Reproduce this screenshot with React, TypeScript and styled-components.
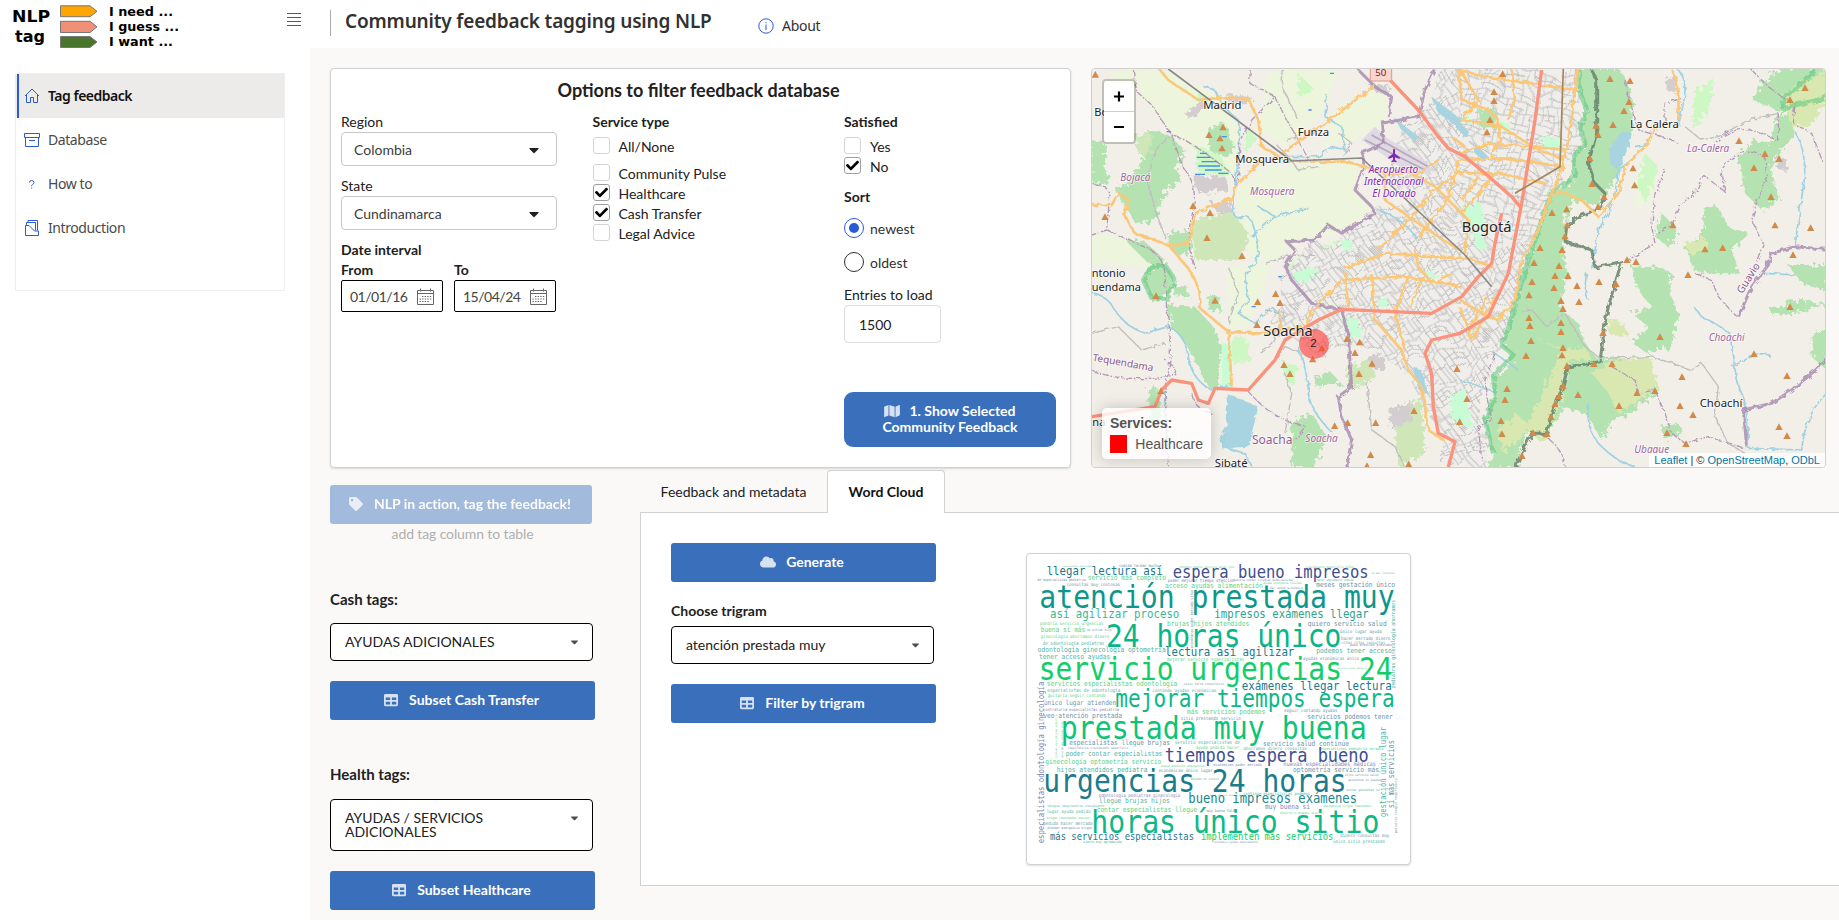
import React from "react";
import styled, { createGlobalStyle, css } from "styled-components";
import { FaMap, FaTag, FaTable, FaCloud, FaCaretDown, FaCheck } from "react-icons/fa";

const BLUE = "#396fbb";
const ACCENT = "#2a5bd7";

const GlobalStyle = createGlobalStyle`
  * { box-sizing: border-box; }
  html, body { margin: 0; padding: 0; overflow: hidden; }
  body { font-family: Lato, "Liberation Sans", sans-serif; font-size: 14px; color: #212121; background: #faf9f8; }
`;

/* ---------- Page frame ---------- */

const Page = styled.div`
  display: flex;
  width: 1839px;
  height: 920px;
  overflow: hidden;
  background: #faf9f8;
`;

const Sidebar = styled.aside`
  flex: 0 0 310px;
  background: #fff;
`;

const SidebarTop = styled.div`
  display: flex;
  justify-content: space-between;
  height: 73px;
  padding: 0 9px 0 0;
`;

const MenuIcon = styled.svg`
  width: 14px;
  height: 14px;
  margin-top: 13px;
`;

const Nav = styled.nav`
  width: 270px;
  height: 218px;
  margin-left: 15px;
  border: 1px solid #eee;
`;

const NavItem = styled.a<{ $active?: boolean }>`
  display: flex;
  align-items: center;
  gap: 7px;
  height: 44px;
  padding: 0 0 1px 7px;
  font-family: "Noto Sans", sans-serif;
  font-size: 14px;
  letter-spacing: ${(p) => (p.$active ? "-0.5px" : "-0.42px")};
  font-weight: ${(p) => (p.$active ? 600 : 400)};
  color: ${(p) => (p.$active ? "#111" : "#4a4a4a")};
  background: ${(p) => (p.$active ? "#edebe9" : "transparent")};
  box-shadow: ${(p) => (p.$active ? `inset 1px 0 #edebe9, inset 3px 0 ${ACCENT}` : "none")};
  svg { width: 18px; height: 18px; fill: none; stroke: ${ACCENT}; stroke-width: 1; }
`;

const Main = styled.main`
  flex: 1;
  min-width: 0;
`;

const Header = styled.header`
  display: flex;
  height: 48px;
  padding: 10px 0 0 20px;
  background: #fff;
`;

const HeaderTitle = styled.h1`
  height: 26px;
  width: 428px;
  margin: 0;
  padding-left: 14px;
  border-left: 1px solid #aaa;
  font: 600 19px/22px "Noto Sans", sans-serif;
  letter-spacing: -0.17px;
  color: #323130;
  white-space: nowrap;
`;

const About = styled.div`
  display: flex;
  align-items: center;
  gap: 8px;
  height: 31px;
  font: 400 14px "Noto Sans", sans-serif;
  letter-spacing: -0.3px;
  color: #323130;
  svg { width: 16px; height: 16px; fill: none; stroke: ${ACCENT}; }
`;

const TopRow = styled.section`
  display: flex;
  gap: 20px;
  padding: 20px 0 0 20px;
`;

const card = css`
  background: #fff;
  border: 1px solid #d0d1d2;
  border-radius: 4px;
  box-shadow: 0 1px 2px rgba(34, 36, 38, 0.15);
`;

/* ---------- Filter card ---------- */

const FilterCard = styled.div`
  ${card}
  width: 741px;
  height: 400px;
  padding: 8px 14px 0 10px;
`;

const CardTitle = styled.h2`
  margin: 0;
  font-size: 18px;
  line-height: 26px;
  font-weight: 700;
  text-align: center;
  letter-spacing: 0;
`;

const Columns = styled.div`
  display: grid;
  grid-template-columns: 216px 216px 212px;
  column-gap: 35.5px;
  padding-top: 9px;
`;

const Label = styled.div<{ $bold?: boolean; $size?: number }>`
  height: 20px;
  line-height: 20px;
  font-size: ${(p) => p.$size ?? 14}px;
  font-weight: ${(p) => (p.$bold ? 700 : 400)};
`;

const Select = styled.div<{ $dark?: boolean; $h?: number; $mb?: number }>`
  display: flex;
  justify-content: space-between;
  align-items: flex-start;
  width: ${(p) => (p.$dark ? 263 : 216)}px;
  height: ${(p) => p.$h ?? 34}px;
  margin-bottom: ${(p) => p.$mb ?? 0}px;
  padding: ${(p) => (p.$dark ? "11px 12px 0 14px" : "9px 14px 0 12px")};
  line-height: ${(p) => (p.$dark ? 14 : 16)}px;
  background: #fff;
  border: 1px solid ${(p) => (p.$dark ? "#000" : "#c8c8c8")};
  border-radius: 4px;
  color: ${(p) => (p.$dark ? "#212121" : "#3c3c3c")};
  svg { width: ${(p) => (p.$dark ? 11 : 16)}px; height: ${(p) => (p.$dark ? 12 : 16)}px; flex: none; margin-top: ${(p) => (p.$dark ? 1 : 0)}px; color: ${(p) => (p.$dark ? "#4d4d4d" : "#212121")}; }
  span { max-width: 170px; }
`;

const DateRow = styled.div`
  display: flex;
  gap: 11px;
`;

const DateField = styled.div`
  display: flex;
  align-items: center;
  justify-content: space-between;
  width: 102px;
  height: 32px;
  padding: 0 8px;
  border: 1px solid #000;
  border-radius: 2px;
  letter-spacing: -0.5px;
  color: #444;
  svg { width: 17px; height: 17px; }
`;

const CheckRow = styled.label<{ $mb?: number }>`
  display: flex;
  align-items: center;
  gap: 9px;
  height: 20px;
  margin-bottom: ${(p) => p.$mb ?? 0}px;
`;

const CheckBox = styled.span<{ $on?: boolean }>`
  display: flex;
  align-items: center;
  justify-content: center;
  width: 17px;
  height: 17px;
  margin-bottom: 1px;
  border: 1px solid ${(p) => (p.$on ? "#a0a0a0" : "#d4d4d5")};
  border-radius: 3px;
  svg { width: 13px; height: 13px; color: #000; }
`;

const RadioRow = styled.label`
  display: flex;
  align-items: center;
  gap: 6px;
  height: 34px;
  color: #323130;
`;

const Radio = styled.span<{ $on?: boolean }>`
  display: flex;
  align-items: center;
  justify-content: center;
  width: 20px;
  height: 20px;
  border: 1px solid ${(p) => (p.$on ? ACCENT : "#323130")};
  border-radius: 50%;
  &::after {
    content: "";
    width: 10px;
    height: 10px;
    border-radius: 50%;
    background: ${(p) => (p.$on ? ACCENT : "transparent")};
  }
`;

const NumberField = styled.div`
  width: 97px;
  height: 38px;
  margin-bottom: 49px;
  padding-left: 14px;
  line-height: 38px;
  border: 1px solid #dcdcdd;
  border-radius: 4px;
`;

const Button = styled.button<{ $w?: number; $tall?: boolean; $faded?: boolean }>`
  display: flex;
  align-items: center;
  justify-content: center;
  gap: 10px;
  width: ${(p) => p.$w ?? 265}px;
  height: ${(p) => (p.$tall ? 55 : 39)}px;
  padding: 0 ${(p) => (p.$tall ? 0 : 3)}px 2px 0;
  border: 0;
  border-radius: ${(p) => (p.$tall ? 9 : 3)}px;
  background: ${BLUE};
  opacity: ${(p) => (p.$faded ? 0.45 : 1)};
  color: #fff;
  font: 700 14px/16px Lato, sans-serif;
  letter-spacing: ${(p) => (p.$faded ? -0.03 : 0)}px;
  svg { opacity: 0.8; width: 16px; height: 14px; vertical-align: -2px; }
  span svg { margin-right: 9px; }
`;

/* ---------- Map ---------- */

const MapCard = styled.div`
  position: relative;
  width: 735px;
  height: 400px;
  border: 1px solid #cfcfd0;
  border-radius: 4px;
  overflow: hidden;
  font-family: "Liberation Sans", sans-serif;
  > svg { display: block; }
`;

const ZoomControl = styled.div`
  position: absolute;
  left: 10px;
  top: 10px;
  border: 2px solid rgba(0, 0, 0, 0.2);
  border-radius: 4px;
  background: #fff;
  background-clip: padding-box;
  svg { display: block; }
`;

const Legend = styled.div`
  position: absolute;
  left: 10px;
  bottom: 8px;
  width: 109px;
  height: 51px;
  padding: 6px 8px;
  color: #555;
  background: rgba(255, 255, 255, 0.8);
  border-radius: 5px;
  box-shadow: 0 0 15px rgba(0, 0, 0, 0.2);
  font-size: 14px;
  line-height: 18px;
`;

const LegendRow = styled.div`
  display: flex;
  gap: 8px;
  margin-top: 3px;
  &::before { content: ""; width: 18px; height: 18px; background: #f00; }
`;

const Attribution = styled.div`
  position: absolute;
  right: 0;
  bottom: 0;
  height: 14px;
  padding: 0 5px;
  font-size: 11px;
  line-height: 14px;
  color: #333;
  background: rgba(255, 255, 255, 0.8);
  a { color: #0078a8; }
`;

const forests = [
  "1480,24 1486,100 1505,150 1485,200 1500,250 1465,290 1470,350 1430,385 1400,395 1395,430 1370,480 1350,540 1330,600 1320,640 1300,700 1290,760 1265,820 1248,855 1285,885 1265,930 1225,950 1230,1010 1200,1080 1210,1130 1225,1180 1210,1225 1290,1225 1310,1170 1330,1115 1390,1120 1430,1060 1440,960 1450,910 1540,900 1500,850 1480,790 1430,750 1430,700 1450,640 1440,600 1440,500 1450,450 1480,420 1540,440 1565,400 1600,340 1615,260 1640,220 1645,130 1625,60 1600,24",
  "190,210 250,225 300,270 270,330 290,350 240,400 210,480 150,490 120,440 90,380 130,370 170,300",
  "370,205 420,190 445,250 430,290 375,285",
  "20,240 60,250 60,310 75,370 20,370",
  "250,735 330,740 385,800 410,860 405,900 400,990 370,985 340,920 300,850 260,800",
  "120,540 180,545 240,600 230,630 180,600",
  "175,660 195,625 240,615 270,660 245,715 200,715",
  "250,520 310,510 320,560 290,590 250,560",
  "265,675 310,680 310,710 265,705",
  "365,710 400,705 410,750 375,755",
  "620,1090 680,1060 725,1130 690,1221 620,1221",
  "690,960 730,930 770,970 690,980",
  "1960,290 2010,240 2085,260 2055,330 2085,410 2030,450 1980,400",
  "1730,460 1760,490 1780,520 1750,560 1710,530",
  "1860,440 1890,430 1930,500 1990,520 1940,570 1960,640 1830,640 1800,560 1850,520",
  "1720,620 1760,640 1755,700 1780,760 1760,860 1690,880 1640,850 1690,800 1640,760 1700,740 1660,690 1640,620",
  "1450,910 1600,890 1700,930 1720,990 1640,1060 1580,1080 1550,1140 1500,1060 1430,1040",
  "2050,740 2100,740 2110,725 2160,720 2225,740 2225,720 2160,755 2060,765",
  "2110,615 2225,615 2225,690 2150,670",
  "2180,830 2225,800 2225,930 2180,890",
  "1730,1100 1780,1090 1790,1120 1740,1140",
  "2000,120 2050,50 2090,24 2225,24 2225,110 2150,120 2080,150",
  "2070,180 2110,150 2130,220 2080,290 2060,250",
  "190,990 215,980 230,1060 200,1110",
];
const farms = [
  "60,30 240,30 420,120 460,190 470,290 450,370 350,300 260,220 150,90",
  "560,320 820,310 810,380 870,450 760,520 660,540 560,600 500,600 460,450 450,390",
  "550,30 760,30 720,150 600,260 520,200",
  "760,140 900,80 900,190 830,230 720,260",
  "120,530 0,520 20,610 180,620 220,560",
  "430,620 560,610 520,720 480,800 430,810",
  "1650,330 1720,330 1700,420 1650,450",
];
const pastures = [
  "330,480 440,450 490,520 470,600 330,600 320,520",
  "780,930 860,890 870,950 800,990",
  "930,1080 1010,1010 1020,1180 940,1225",
  "150,230 200,220 200,280 160,285",
];
const olive = [
  "1340,830 1440,870 1500,860 1520,900 1450,900 1430,1020 1370,1150 1330,1110 1250,1180 1240,1110 1290,1060 1330,1090 1390,960 1430,870",
  "1580,900 1700,890 1720,980 1600,1060 1570,1000 1520,940",
  "2090,110 2220,30 2225,110 2180,200 2120,200",
  "1570,780 1620,790 1630,830 1570,825",
  "1800,550 1860,530 1870,560 1820,590",
];
const limes = [
  "340,90 380,140 330,150", "480,200 520,240 480,280", "330,260 400,280 440,350 340,340",
  "600,640 640,590 760,540 740,640 640,680", "440,840 480,830 500,900 440,910", "1090,40 1120,30 1130,70 1100,80",
  "1680,280 1720,320 1680,430 1660,380", "1830,90 1890,60 1870,150 1820,210", "640,40 690,90 640,110",
  "590,900 640,920 630,980 600,960",
];
const greys = [
  "300,160 350,120 370,140 310,180", "320,350 420,350 430,390 340,400", "380,430 440,420 440,460 390,455",
  "430,100 500,110 490,130 430,130", "1740,60 1780,50 1770,100 1745,90", "2075,290 2110,300 2100,335 2075,325",
  "850,890 900,880 900,930 860,930", "910,1050 980,1020 980,1080 920,1110", "850,70 920,80 910,100 860,95", "990,940 1030,930 1030,1000 995,1000",
];
const urban =
  "1050,24 1480,24 1490,240 1465,300 1400,395 1370,480 1325,610 1290,740 1250,860 1215,960 1190,1080 1200,1221 1080,1221 1060,1100 950,930 880,880 800,850 720,900 600,820 540,780 590,740 590,660 640,590 760,530 880,450 960,420 900,330 960,220 1030,120";
const north = "1120,24 1480,24 1490,240 1465,300 1400,395 1340,560 1200,560 1130,400";
const parks = [
  "1370,230 1425,235 1420,270 1370,265", "1130,440 1190,430 1200,500 1150,510", "780,780 820,775 830,830 800,835",
  "1095,1020 1140,980 1165,1110 1100,1080", "770,540 800,530 800,570 775,570", "1160,520 1180,510 1210,560 1180,570",
  "1250,190 1270,185 1275,215 1250,215", "1130,180 1150,160 1160,190", "880,720 910,715 905,740 880,740", "1020,640 1050,630 1050,660",
  "620,640 700,620 680,660 640,670",
];
const rivers = [
  "M355,80 Q390,80 400,110 T460,180 Q470,250 450,370 T470,470 T520,590 L480,650 L490,720 L460,760 L510,790 L560,740 L590,770",
  "M610,290 L700,290 L740,260 L780,270 L770,200 L720,170 L725,105",
  "M520,440 L570,470 L500,530", "M570,470 L670,445",
  "M20,700 Q60,700 90,750 T180,820 L250,800 Q300,820 310,890 T380,990 L440,970",
  "M640,860 Q670,950 670,990 T700,1070 T745,1120",
  "M1780,30 Q1810,60 1795,130 T1780,200 M1650,260 L1690,250 L1640,300 L1600,330 L1590,400 L1570,460 L1540,510 L1520,630",
  "M1505,640 Q1495,690 1510,720 M2130,215 Q2170,280 2155,380 T2130,560",
  "M1830,745 L1850,770 L1890,790 L1935,820 Q1950,960 1970,1000 T1990,1165 L2150,1170 Q2160,1060 2225,1000",
  "M1510,1030 Q1500,1110 1550,1160 T1650,1220 M2040,640 L2130,645 M1940,920 L2020,880 L2055,885",
  "M1230,880 L1300,930 M1125,960 L1230,995 M880,450 Q950,470 1000,540",
  "M240,990 Q235,1060 250,1110 M410,1160 L480,1180 L500,1220",
];
const bounds = [
  "M145,30 L155,95 L200,135 L260,225 L300,240 L370,285 L440,340 L455,375",
  "M260,225 Q280,300 310,345 T320,470 T330,625",
  "M495,30 V70 L570,110 L500,180 L465,240 L460,370",
  "M570,110 L600,170 L640,240 L670,300",
  "M20,370 L60,380 L75,400 L65,510 L20,525 M65,510 Q130,540 180,560 T240,640 L245,750 Q270,870 240,980 L250,1220",
  "M20,930 Q80,960 200,955 T240,900 M320,1000 Q330,1050 380,1060 M490,995 Q540,1050 580,1070 T660,1100 L630,1140",
  "M1620,60 L1640,150 L1660,210 L1730,230 M1740,180 L1740,130 L1790,115 M1720,225 L1780,250",
  "M2000,30 L2050,80 L2090,110 L2130,130 L2125,190 L2180,220 L2215,310",
  "M1890,250 Q1960,170 2080,245 L2080,160 M1920,395 L1910,330 Q1960,250 2040,290 L2045,350 L2020,410 L2000,480 L2035,550 L2005,630",
  "M1920,395 L1855,345 L1830,400 L1790,430 L1760,495 L1720,520 M1740,330 L1710,400 L1700,500 L1710,550 L1630,600",
  "M1830,640 L1880,660 L1900,710 L1955,770 M1580,920 L1650,960 L1660,1000 L1710,990 L1740,1060 L1760,1120 L1800,1150 L1870,1130 L1980,1165",
  "M1360,1120 Q1430,1150 1440,1220 M1230,880 L1200,960 L1220,1080 L1180,1100 L1190,1200",
];
const strongBounds = [
  "M820,30 L870,80 L920,110 L910,170",
  "M1050,24 L1020,90 L1000,170 L890,190 L895,250 L830,280 L840,310 L810,390 L860,440 L870,460 L770,520 L730,495 L690,540 L605,545 L630,570 L600,620 L620,660 L680,730 L770,750 L790,830 L800,980 L760,1010 L770,1070 L800,1140 L785,1221",
  "M2225,900 L2180,940 L2120,990 L2060,1030 L1975,1050 L1985,1160 M1960,770 L2000,680 L2050,615 L2060,580 L2130,560 L2225,568",
];
const minorRoads = [
  "M260,225 L215,265 L185,350 L210,450 L245,540",
  "M20,820 L100,800 L170,870 L240,850",
  "M1800,200 L1850,240 L1900,230 L1990,180 L2080,160",
  "M1310,755 L1340,750 L1385,800 L1440,760 L1500,860 L1545,895 L1700,890 L1820,930 L1850,910 L1900,980 L1890,1070 L1930,1150 L1980,1180",
  "M430,620 L460,700 L430,790 M600,940 L620,1000 L600,1120 M845,960 L860,1110 L930,1160 L960,1221",
  "M595,30 L590,80 L640,180 M760,220 L800,250 L770,290 M600,240 L640,230 M570,250 L610,290 L640,330 L700,320",
  "M540,610 L620,585 L700,590 M540,750 L600,760 L560,850 L520,880 M570,900 L600,860 L650,880",
];
const yellowRoads = [
  "M220,24 L250,60 L340,120 L420,112 L490,118 L520,180 L530,260 L600,300 L690,305 L790,305 L900,340 L960,330",
  "M590,280 L720,190 L870,75", "M530,300 L450,380 L440,415 L330,460 L320,520 L310,550 L250,555 L150,520 L115,460 L130,420 L100,400 L80,435 L20,435",
  "M250,555 L310,625 L340,680 L345,745 L430,815 L440,980", "M430,815 L520,820 L660,800 L680,755 L770,660 L960,650 L1130,680",
  "M900,340 L900,420 L970,470 L1060,530 L1125,570 M1125,30 L1180,120 L1130,180 L1250,200 L1360,270 L1440,300",
  "M1125,30 L1200,50 L1470,90 M1280,30 L1290,110 L1270,180 M960,330 L1050,380 L1150,480 L1140,580 M1120,285 L1210,250 L1450,270",
  "M1000,530 L1090,420 L1120,300 M1480,24 L1470,90 L1450,240 L1430,330 L1400,400 L1360,510 L1310,600 L1290,720 L1240,780 L1190,760 L1125,720",
  "M780,640 L790,740 M860,640 L870,780 L950,870 L970,930 L1010,980 L1030,1110 L1060,1130 M970,650 L930,760 L960,870 M1010,660 L975,740 M1030,1110 L1075,1140",
  "M780,625 L900,580 L1150,595 L1220,620 M880,570 L960,490 L1040,400 M1125,740 L1160,840 L1240,700 M1210,700 L1150,820",
  "M1760,30 Q1785,70 1780,180 M1710,200 L1690,250 L1620,320 L1600,400 L1540,470 L1520,450 L1490,420 L1430,395 L1390,410",
  "M1125,340 L1240,340 L1380,370 M1230,340 L1180,400 L1125,460 M585,750 V830",
  "M1120,30 L1130,120 L1210,150 L1240,180 L1245,240 L1215,300 M1125,300 L1250,295 L1440,320 M1180,350 L1130,420",
  "M900,340 L1000,340 L1060,300 M1040,400 L1125,330 M990,570 L1000,620 L1040,670 L1100,640 M1100,230 L1140,260",
];
const redRoads = [
  "M915,60 L1000,150 L1060,230 L1090,265 L1140,290 L1200,340 L1280,410 L1305,440",
  "M1370,30 L1350,180 L1310,430 L1270,640 L1210,770 L1125,820 L1040,840 L1020,880 L1040,940 L1045,1040 L1060,1120 L1110,1145 L1090,1221",
  "M1250,460 L1230,550 L1220,610 L1180,650 L1130,710 L1040,760 L770,748 L700,780 L600,840 L570,900 L490,990 L390,985 L370,1030 L340,1020 L320,970 L260,960 L230,990 L210,1040 L20,1070",
];
const ridge = "M1520,30 L1535,60 L1535,220 L1510,310 L1530,370 L1560,400 L1545,445 L1480,470 L1445,500 L1440,545 L1520,570 L1530,620 L1610,605 L1590,670 L1570,740 L1560,790 L1545,905 L1450,920 L1430,990 L1400,1060 L1385,1120 L1340,1120 L1310,1180 L1290,1225";
const reserves = [
  "M1480,30 L1486,100 L1505,150 L1485,200 L1500,250 L1465,290 L1470,350 L1400,395 L1370,480 L1330,600 L1300,700 L1265,820 L1248,855 L1285,885 L1225,950 L1230,1010 L1200,1080 L1225,1180",
  "M175,660 L195,625 L240,615 L270,660 L245,715 L200,715Z",
  "M2090,150 L2100,110 L2150,70 L2190,30 M2090,150 L2130,135 L2200,120 L2225,105",
];
const peaks: [number, number][] = [
  [31,44],[414,202],[372,225],[405,235],[411,265],[324,438],[375,459],[60,471],[366,534],[471,588],[213,708],[390,722],[518,726],[572,702],[585,729],[516,795],[597,915],[615,942],[683,898],[711,865],[786,837],[824,847],[810,879],[861,911],[822,942],[749,1098],[788,1089],[872,1089],[987,1053],[1116,927],[1124,1086],[857,1185],[846,1218],[971,1213],[228,993],
  [1253,42],[1227,96],[1227,123],[1215,180],[1206,217],[1575,57],[1635,63],[1632,126],[1617,153],[1584,195],[1533,197],[1539,225],[1515,295],[1644,325],[1649,376],[1521,372],[1557,411],[1539,441],[1445,448],[1401,459],[1446,496],[1440,529],[1365,564],[1431,570],[1347,609],[1422,618],[1626,600],[1653,606],[1764,496],[1860,568],[1913,564],[1962,243],[2040,282],[2007,324],[2082,297],[2058,411],[2070,496],[2177,504],[2124,585],[2160,84],[2115,120],
  [1341,666],[1410,648],[1449,648],[1407,684],[1476,678],[1542,666],[1593,672],[1332,706],[1428,723],[1434,747],[1482,726],[1332,774],[1335,798],[1428,789],[1428,816],[1338,843],[1323,888],[1434,864],[1431,886],[1446,918],[1527,912],[1581,912],[1554,819],[1434,978],[1422,1008],[1479,1005],[1410,1032],[1398,1071],[1266,987],[1260,1020],[1248,1083],[1251,1122],[1344,1119],[1386,1122],[1311,1188],[1602,1038],[1656,999],[1710,993],[1791,951],[1785,1038],[1824,1065],[1746,1119],[1803,1152],[1725,831],[1809,645],[2115,741],[2007,882],[2106,948],[2082,1101],[2106,1128],[1146,1017],
];

type Place = [string, number, number, number, string?, boolean?, string?];
const places: Place[] = [
  ["Bo", 28, 168, 33], ["Madrid", 355, 147, 34], ["Funza", 638, 229, 34], ["Mosquera", 451, 308, 34],
  ["Bojacá", 106, 363, 30, "#a265a0", true], ["Mosquera", 495, 404, 30, "#a265a0", true],
  ["Aeropuerto", 851, 339, 30, "#8427b4", true], ["Internacional", 837, 375, 30, "#8427b4", true], ["El Dorado", 862, 411, 30, "#8427b4", true],
  ["Bogotá", 1130, 516, 44], ["La Calera", 1635, 204, 34], ["La-Calera", 1806, 276, 30, "#a265a0", true],
  ["ntonio", 20, 651, 33], ["uendama", 20, 693, 33], ["Soacha", 535, 829, 44], ["Soacha", 501, 1153, 36, "#925c92"],
  ["Soacha", 661, 1145, 30, "#a265a0", true], ["Sibaté", 389, 1220, 34], ["Choachí", 1844, 1042, 34],
  ["Choachi", 1871, 843, 30, "#a265a0", true], ["Ubaque", 1648, 1179, 30, "#a265a0", true], ["na", 22, 1098, 33],
  ["Tequendama", 22, 902, 30, "#8a5588", false, "rotate(10 22 902)"], ["Guavio", 1972, 703, 31, "#8a5588", false, "rotate(-58 1972 703)"],
];

const draw = (list: string[], stroke: string, width: number, extra: object = {}) =>
  list.map((d, i) => <path key={stroke + i} d={d} fill="none" stroke={stroke} strokeWidth={width} strokeLinejoin="round" {...extra} />);
const fillAreas = (list: string[], color: string) => list.map((p, i) => <polygon key={color + i} points={p} fill={color} />);

const MapDrawing = () => (
  <svg width="733" height="398" viewBox="21 27 2199 1194" fontFamily='"Noto Sans", sans-serif'>
    <defs>
      <pattern id="blocks" width="97" height="83" patternUnits="userSpaceOnUse" patternTransform="rotate(-34)">
        <path d="M0 3H97M0 19H62M20 34H97M0 52H50M44 66H97M4 0V83M22 3V52M41 0V34M58 19V83M76 0V66M88 34V83" stroke="#bcbabb" strokeWidth="2.6" fill="none" />
      </pattern>
      <pattern id="blocksNorth" width="103" height="89" patternUnits="userSpaceOnUse" patternTransform="rotate(13)">
        <path d="M0 3H103M0 22H70M30 38H103M0 57H60M50 73H103M4 0V89M24 3V57M45 0V38M62 22V89M82 0V73" stroke="#bab8b9" strokeWidth="2.6" fill="none" />
      </pattern>
      <filter id="ragged" x="-5%" y="-5%" width="110%" height="110%">
        <feTurbulence type="fractalNoise" baseFrequency="0.07" numOctaves="3" seed="4" />
        <feDisplacementMap in="SourceGraphic" scale="36" />
      </filter>
      <filter id="wiggle" x="-5%" y="-5%" width="110%" height="110%">
        <feTurbulence type="fractalNoise" baseFrequency="0.06" numOctaves="2" seed="9" />
        <feDisplacementMap in="SourceGraphic" scale="16" />
      </filter>
      <filter id="bend" x="-5%" y="-5%" width="110%" height="110%">
        <feTurbulence type="fractalNoise" baseFrequency="0.012" numOctaves="2" seed="3" />
        <feDisplacementMap in="SourceGraphic" scale="70" />
      </filter>
    </defs>
    <rect width="2260" height="1260" fill="#f2efe9" />
    <g filter="url(#ragged)">
      {fillAreas(farms, "#edf5dc")}
      {fillAreas(forests, "#b4e2b0")}
      {fillAreas(pastures, "#cfe6b8")}
      {fillAreas(olive, "#d8e8b0")}
      {fillAreas(limes, "#cdf8c3")}
      {fillAreas(greys, "#d3cdd0")}
    </g>
    <polygon points="410,850 440,850 440,985 412,975" fill="#c8fcd5" />
    <g filter="url(#bend)">
      <polygon points={urban} fill="#f0eeea" />
      <polygon points={urban} fill="url(#blocks)" />
      <polygon points={north} fill="#f0eeea" />
      <polygon points={north} fill="url(#blocksNorth)" />
    </g>
    <g filter="url(#ragged)">
      {fillAreas(["1180,150 1235,145 1230,205 1185,205", "1395,400 1370,480 1330,600 1300,700 1265,820 1330,820 1400,600 1440,430", "1480,24 1486,100 1505,150 1485,200 1500,250 1465,290 1470,350 1420,390 1530,390 1530,24"], "#b4e2b0")}
      {fillAreas(parks, "#c8fcd5")}
    </g>
    <polygon points="830,240 870,200 900,230 1030,310 1040,345 960,330" fill="#dfd9e3" />
    <path d="M840 240L1020 330M860 225L1030 320" stroke="#b7a8bb" strokeWidth="5" />
    <g filter="url(#wiggle)" fill="#a8d4e2">
      <path d="M1590 235L1610 215L1640 220L1635 250L1610 310L1595 330L1575 310L1572 270Z" />
      <path d="M425 1000L520 1040L500 1120L490 1160L410 1165L405 1130L425 1100Z" />
      <path d="M925 170L1000 230L990 245L950 210ZM1040 110L1130 180L1125 205L1060 160Z" />
      <path d="M1110 170L1155 220L1140 230L1110 200ZM1170 250L1210 290L1200 305L1170 280ZM985 920L1010 930L1030 1000L1000 990Z" />
    </g>
    <g filter="url(#wiggle)">
      {draw(rivers, "#9fd1e3", 5)}
      {draw(bounds, "#b597b8", 4, { strokeDasharray: "20 5 5 5" })}
      {draw(strongBounds, "#a588ae", 9, { opacity: 0.8 })}
      {draw(reserves, "#4fc476", 14, { opacity: 0.5 })}
      {draw([ridge], "#67836a", 9, { opacity: 0.85 })}
      {draw(minorRoads, "#c0bebf", 4)}
      {draw(yellowRoads, "#fac878", 8)}
    </g>
    {draw(redRoads, "#fa927c", 10)}
    <path d="M1435 24L1425 320L1290 400" fill="none" stroke="#a3865a" strokeWidth="5" />
    <path d="M250 27L620 303L830 294L1140 585L1220 680" fill="none" stroke="#888" strokeWidth="5" />
    <path d="M335 292h40M350 305h45M340 318h40M370 318h35M360 330h50M330 343h30M400 340h30M345 280h20M245 215h12M410 230h15M670 150h10M735 40h12M580 650h10M500 740h12" stroke="#3f91f2" strokeWidth="4" />
    {peaks.map(([x, y], i) => <path key={i} d={`M${x} ${y - 11}l11 20h-22z`} fill="#d38a48" />)}
    <path transform="translate(927 287)" d="M-3 -18Q0 -24 3 -18V-6L17 5V10L3 5V13L8 17V20L0 18L-8 20V17L-3 13V5L-17 10V5L-3 -6Z" fill="#8427b4" />
    <rect x="856" y="10" width="64" height="53" rx="5" fill="#f9d5ce" stroke="#d99a8e" strokeWidth="3" />
    <text x="871" y="48" fontSize="29" fill="#74231a">50</text>
    <circle cx="687" cy="852" r="45" fill="#ff3b3b" fillOpacity="0.62" />
    {places.map(([t, x, y, s, c, it, tr], i) => (
      <text key={i} x={x} y={y} fontSize={s} fill={c ?? "#222"} fontStyle={it ? "italic" : "normal"} transform={tr}
        stroke="#fff" strokeOpacity="0.7" strokeWidth="5" paintOrder="stroke" strokeLinejoin="round">{t}</text>
    ))}
    <text x="676" y="862" fontSize="34" fontFamily='"Liberation Sans", sans-serif' fill="#222">2</text>
  </svg>
);

/* ---------- Lower area ---------- */

const BottomRow = styled.section`
  display: flex;
  padding-left: 20px;
`;

const TagColumn = styled.div`
  flex: 0 0 310px;
  padding-top: 17px;
`;

const Hint = styled.div`
  width: 265px;
  height: 20px;
  margin-bottom: 45px;
  line-height: 20px;
  text-align: center;
  color: #b0afae;
  letter-spacing: -0.12px;
`;

const Gap = styled.div<{ $h: number }>`
  height: ${(p) => p.$h}px;
`;

const Workspace = styled.div`
  flex: 1;
  min-width: 0;
  padding-top: 2px;
`;

const Tabs = styled.div`
  display: flex;
  height: 43px;
  margin-bottom: -1px;
  position: relative;
`;

const Tab = styled.div<{ $active?: boolean }>`
  width: ${(p) => (p.$active ? 118 : 187)}px;
  height: 43px;
  line-height: ${(p) => (p.$active ? 42 : 43)}px;
  text-align: center;
  ${(p) => p.$active && css`
    font-weight: 700;
    color: #111;
    background: #fff;
    border: 1px solid #d0d1d2;
    border-bottom: 0;
    border-radius: 4px 4px 0 0;
  `}
`;

const Panel = styled.div`
  display: flex;
  gap: 90px;
  width: 1220px;
  height: 374px;
  padding: 30px 0 0 30px;
  background: #fff;
  border: 1px solid #d0d1d2;
`;

const CloudCard = styled.div`
  ${card}
  width: 385px;
  height: 312px;
  margin-top: 10px;
  svg { display: block; }
`;

const T = "#0d968a", G1 = "#0cb886", G2 = "#20cf68", B = "#414f91", S = "#21788c";
const L1 = "#4fb3a5", L2 = "#58d286", L3 = "#6b94a8", L4 = "#8087b4";

/* text, left, baseline, width, colour */
type Word = [string, number, number, number, string];
const bigWords: Word[] = [
  ["llegar lectura así", 80, 90, 348, S], ["espera bueno impresos", 458, 99, 588, B],
  ["atención prestada muy", 58, 189, 1066, T], ["así agilizar proceso", 90, 219, 388, "#39b893"],
  ["impresos exámenes llegar", 583, 218, 463, "#2ba58b"], ["24 horas único", 258, 305, 706, "#06b687"],
  ["lectura así agilizar", 435, 334, 388, S], ["servicio urgencias 24", 56, 405, 1062, "#13ce68"],
  ["exámenes llegar lectura", 665, 436, 450, S], ["mejorar tiempos espera", 286, 486, 838, G1],
  ["prestada muy buena", 122, 582, 918, "#0bc477"], ["tiempos espera bueno", 434, 650, 612, B],
  ["urgencias 24 horas", 70, 741, 910, "#1a7c8d"], ["bueno impresos exámenes", 505, 774, 506, "#21868c"],
  ["horas único sitio", 214, 863, 864, G1], ["más servicios especialistas", 90, 886, 432, S],
  ["implementen más servicios", 543, 886, 397, G2],
];
const smallWords: Word[] = [
  ["servicio más completo", 203, 106, 235, L2], ["acceso ayudas alimentación", 435, 129, 293, L2], ["meses gestación único", 889, 127, 236, L3],
  ["consultas muy costosas", 140, 123, 160, L3], ["brujas hijos atendidos", 441, 244, 247, L2], ["quiero servicio salud", 863, 244, 237, L3],
  ["buena si más", 62, 261, 134, L2], ["pondría servicio urgencias", 60, 240, 190, L2], ["ginecología ahorramos dinero", 62, 280, 206, L2], ["de odontología pediatras", 68, 299, 185, L1],
  ["odontología ginecología optometría", 53, 322, 384, L1], ["tener acceso ayudas", 57, 343, 214, L1], ["podemos tener acceso", 889, 323, 226, L1],
  ["único lugar ayuda", 960, 265, 125, L3], ["hacer mercado dinero", 963, 286, 148, L3], ["mejorar servicio especialistas", 441, 347, 232, L2],
  ["ayudas económicas único", 849, 345, 168, L3], ["servicios especialistas odontología", 80, 423, 392, L2], ["especialistas de odontología", 82, 441, 219, L1],
  ["guitaría seguir contando", 83, 457, 175, L2], ["único lugar atienden", 72, 481, 216, L3], ["contratoría especialistas pediatría", 70, 497, 227, L4],
  ["veo atención prestada", 70, 518, 236, L3], ["contando ayudas económicas", 397, 440, 192, L1], ["más servicios podemos", 501, 508, 235, L2],
  ["seguir contando ayudas", 792, 500, 160, L3], ["sitio prestando servicio", 482, 524, 180, L3], ["servicios podemos tener", 862, 521, 256, L3],
  ["especialistas llegue brujas", 148, 599, 302, L3], ["servicio especialistas de", 464, 597, 196, L1], ["servicio salud continúe", 729, 602, 258, L3],
  ["poder contar especialistas", 137, 634, 290, L1], ["ginecología optometría servicio", 76, 658, 348, L2], ["hijos atendidos pediatra •", 110, 680, 295, L1],
  ["económicas único lugar", 416, 681, 162, L3], ["optometría servicio más", 819, 680, 258, L3], ["llegue brujas hijos", 237, 774, 212, L1],
  ["odontología pediatras ginecología", 236, 755, 245, L4], ["lugar ayuda pedido", 80, 804, 132, L1], ["contar especialistas llegue", 230, 802, 302, L2],
  ["muy buena si", 735, 793, 135, L4], ["pedido hacer mercado", 70, 839, 148, L3], ["dinero consultas muy", 961, 876, 147, L3],
  ["único sitio prestando", 939, 893, 156, L1], ["terapia respiratoria crecimiento", 82, 785, 170, L1], ["origen reanimador equipo", 80, 821, 128, L2],
  ["atender emergencia origen", 82, 853, 134, L4], ["ahorramos dinero consultas", 670, 616, 190, L1], ["especialistas pediatría terapia", 900, 614, 190, L2],
  ["ayuda pedido hacer", 527, 611, 130, L2], ["respiratoria crecimiento desarrollo", 143, 613, 182, L4], ["continúe especialistas podemos", 670, 750, 200, L1],
  ["emergencia origen reanimador", 910, 785, 146, L2], ["desarrollo podemos recursos", 780, 808, 132, L2], ["de especialistas pediatría", 52, 107, 145, L3],
  ["poder mejorar tiempo atención", 443, 112, 200, L4], ["muestra cuidar cirugías especialistas", 640, 107, 180, L4], ["crecimiento desarrollo niños", 857, 68, 145, L2],
  ["contamos buenos servicio salud line", 477, 68, 165, L2], ["hacer implemento comida", 890, 107, 110, L1], ["ayuda económica visitas", 730, 118, 115, L2],
  ["dar ayuda económica", 750, 131, 98, L3], ["no aún licencia", 1054, 86, 68, L1], ["especialistas falta podemos", 130, 66, 90, L1],
  ["nuevas especialidades médicas", 790, 663, 278, L4], ["económicas poder mercado", 580, 663, 145, L3],
  ["buena atención emergencia", 423, 665, 130, L2], ["muchas no sitios", 513, 705, 84, L1], ["gestantes no pueden", 985, 708, 98, L3],
  ["noches gestantes no", 978, 739, 100, L1], ["hijos servicio salud", 975, 692, 100, L3], ["mejor atención especialidad", 570, 752, 100, L2],
  ["comida tardan mucho", 297, 66, 120, L3], ["pasa atención prestada", 990, 304, 125, L4], ["citas citas consultas", 965, 296, 130, L1],
  ["sitio falta consultorio", 492, 420, 120, L3], ["siento muy agradecida", 190, 893, 115, L1], ["no sitios hijo", 200, 257, 75, L3],
  ["recursos sitios pediatra", 950, 372, 90, L2], ["económica ayudas medicamentos", 582, 893, 132, L4], ["muy buena falta", 560, 800, 90, L3],
];

const vertical: Word[] = [
  ["especialistas odontología ginecología", 71, 895, 485, L4],
  ["gestación único lugar", 1098, 816, 270, L1],
  ["sí más servicios", 1122, 790, 205, L3],
  ["pediatras ginecología ahorramos", 1125, 430, 265, L1],
  ["pediatría terapia respiratoria", 1132, 865, 165, L3],
  ["económicas poder mercado sitio", 518, 310, 175, L3],
  ["continúe especialistas pediatría", 112, 640, 130, L2],
  ["consultas muy costosas único", 128, 640, 110, L1],
];

const CloudText = ({ w, turned }: { w: Word; turned?: boolean }) => {
  const [t, x, y, len, c] = w;
  return (
    <text x={x} y={y} fill={c} fontSize={(len / t.length / 0.602) * 1.15} textLength={len} lengthAdjust="spacingAndGlyphs"
      transform={turned ? `rotate(-90 ${x} ${y})` : undefined}>{t}</text>
  );
};

const WordCloud = () => (
  <svg width="383" height="310" viewBox="21 27 1149 930" fontFamily='"DejaVu Sans Mono", monospace'>
    {smallWords.map((w, i) => <CloudText key={i} w={w} />)}
    {vertical.map((w, i) => <CloudText key={i} w={w} turned />)}
    {bigWords.map((w, i) => <CloudText key={i} w={w} />)}
  </svg>
);

/* ---------- Small drawings ---------- */

const Logo = () => (
  <svg width="190" height="52" fontFamily='"DejaVu Sans", sans-serif' fontWeight="700" fill="#000">
    <text x="12" y="21.5" fontSize="16" textLength="38" lengthAdjust="spacingAndGlyphs">NLP</text>
    <text x="15" y="42" fontSize="16" textLength="30" lengthAdjust="spacingAndGlyphs">tag</text>
    <g stroke="#777" strokeWidth="1">
      <path d="M60.5 5.8H90L97 11.3L90 16.7H60.5Z" fill="#ffa500" />
      <path d="M60.5 21.3H90L97 26.8L90 32.5H60.5Z" fill="#f09078" />
      <path d="M60.5 36.5H90L97 42L90 47.5H60.5Z" fill="#4a752c" />
    </g>
    <text x="109" y="15.7" fontSize="12" textLength="64" lengthAdjust="spacingAndGlyphs">I need ...</text>
    <text x="109" y="31" fontSize="12" textLength="70" lengthAdjust="spacingAndGlyphs">I guess ...</text>
    <text x="109" y="46.3" fontSize="12" textLength="64" lengthAdjust="spacingAndGlyphs">I want ...</text>
  </svg>
);

const CalendarIcon = () => (
  <svg viewBox="0 0 17 17" fill="none" stroke="#666">
    <path d="M.5 2.5H16.5V16.5H.5ZM.5 5.5H16.5M3.5 .5V3.5M13.5 .5V3.5" />
    <path d="M5 8.5H15M2.5 11H15M2.5 13.5H12" strokeDasharray="1.4 1.2" />
  </svg>
);

const Check = ({ label, on, mb }: { label: string; on?: boolean; mb?: number }) => (
  <CheckRow $mb={mb}><CheckBox $on={on}>{on && <FaCheck />}</CheckBox>{label}</CheckRow>
);

export default function App() {
  return (
    <Page>
      <GlobalStyle />
      <Sidebar>
        <SidebarTop>
          <Logo />
          <MenuIcon viewBox="0 0 14 14"><path d="M0 .5H14M0 4.5H14M0 8.5H14M0 12.5H14" stroke={ACCENT} /></MenuIcon>
        </SidebarTop>
        <Nav>
          <NavItem $active>
            <svg viewBox="0 0 18 18"><path d="M2 9L9 2L16 9M3.5 8V15.5H7.5V10.5H10.5V15.5H14.5V8" /></svg>Tag feedback
          </NavItem>
          <NavItem>
            <svg viewBox="0 0 18 18"><path d="M1.5 2.5H16.5V6.5H1.5ZM2.5 6.5V15.5H15.5V6.5M6 9.5H12" /></svg>Database
          </NavItem>
          <NavItem>
            <svg viewBox="0 0 18 18"><path d="M6.5 7.5Q6.5 5.5 8.7 5.5T11 7.5Q11 8.8 9.6 9.5T8.7 11.3M8.7 12.5V13.6" /></svg>How to
          </NavItem>
          <NavItem>
            <svg viewBox="0 0 18 18"><path d="M2.5 6.5H6L11.5 12H15.5V16.5H2.5ZM3.5 6V3.5H12.5V11.5M5 3V1.5H14.5V11.5" /></svg>Introduction
          </NavItem>
        </Nav>
      </Sidebar>
      <Main>
        <Header>
          <HeaderTitle>Community feedback tagging using NLP</HeaderTitle>
          <About>
            <svg viewBox="0 0 16 16"><circle cx="8" cy="8" r="7.2" /><path d="M8 6.5V12M8 4V5.2" /></svg>About
          </About>
        </Header>
        <TopRow>
          <FilterCard>
            <CardTitle>Options to filter feedback database</CardTitle>
            <Columns>
              <div>
                <Label>Region</Label>
                <Select $mb={10}><span>Colombia</span><FaCaretDown /></Select>
                <Label>State</Label>
                <Select $mb={10}><span>Cundinamarca</span><FaCaretDown /></Select>
                <Label $bold>Date interval</Label>
                <DateRow>
                  <div><Label $bold>From</Label><DateField>01/01/16<CalendarIcon /></DateField></div>
                  <div><Label $bold>To</Label><DateField>15/04/24<CalendarIcon /></DateField></div>
                </DateRow>
              </div>
              <div>
                <Label $bold>Service type</Label>
                <Gap $h={4} />
                <Check label="All/None" mb={7} />
                <Check label="Community Pulse" />
                <Check label="Healthcare" on />
                <Check label="Cash Transfer" on />
                <Check label="Legal Advice" />
              </div>
              <div>
                <Label $bold>Satisfied</Label>
                <Gap $h={4} />
                <Check label="Yes" />
                <Check label="No" on mb={11} />
                <Label $bold>Sort</Label>
                <Gap $h={4} />
                <RadioRow><Radio $on />newest</RadioRow>
                <RadioRow><Radio />oldest</RadioRow>
                <Gap $h={6} />
                <Label>Entries to load</Label>
                <NumberField>1500</NumberField>
                <Button $w={212} $tall><span><FaMap />1. Show Selected<br />Community Feedback</span></Button>
              </div>
            </Columns>
          </FilterCard>
          <MapCard>
            <MapDrawing />
            <ZoomControl>
              <svg width="30" height="61"><path d="M10 15.5H20M15 10.5V20.5M10 46H20" stroke="#000" strokeWidth="2.2" /><path d="M0 30.5H30" stroke="#ccc" /></svg>
            </ZoomControl>
            <Legend><b>Services:</b><LegendRow>Healthcare</LegendRow></Legend>
            <Attribution><a>Leaflet</a> | © <a>OpenStreetMap</a>, <a>ODbL</a></Attribution>
          </MapCard>
        </TopRow>
        <BottomRow>
          <TagColumn>
            <Button $w={262} $faded><FaTag />NLP in action, tag the feedback!</Button>
            <Hint>add tag column to table</Hint>
            <Label $bold $size={15}>Cash tags:</Label>
            <Gap $h={14} />
            <Select $dark $h={38} $mb={20}><span>AYUDAS ADICIONALES</span><FaCaretDown /></Select>
            <Button><FaTable />Subset Cash Transfer</Button>
            <Gap $h={44} />
            <Label $bold $size={15}>Health tags:</Label>
            <Gap $h={15} />
            <Select $dark $h={52} $mb={20}><span>AYUDAS / SERVICIOS ADICIONALES</span><FaCaretDown /></Select>
            <Button><FaTable />Subset Healthcare</Button>
          </TagColumn>
          <Workspace>
            <Tabs>
              <Tab>Feedback and metadata</Tab>
              <Tab $active>Word Cloud</Tab>
            </Tabs>
            <Panel>
              <div>
                <Button><FaCloud />Generate</Button>
                <Gap $h={19} />
                <Label $bold>Choose trigram</Label>
                <Gap $h={5} />
                <Select $dark $h={38} $mb={20}><span>atención prestada muy</span><FaCaretDown /></Select>
                <Button><FaTable />Filter by trigram</Button>
              </div>
              <CloudCard><WordCloud /></CloudCard>
            </Panel>
          </Workspace>
        </BottomRow>
      </Main>
    </Page>
  );
}
